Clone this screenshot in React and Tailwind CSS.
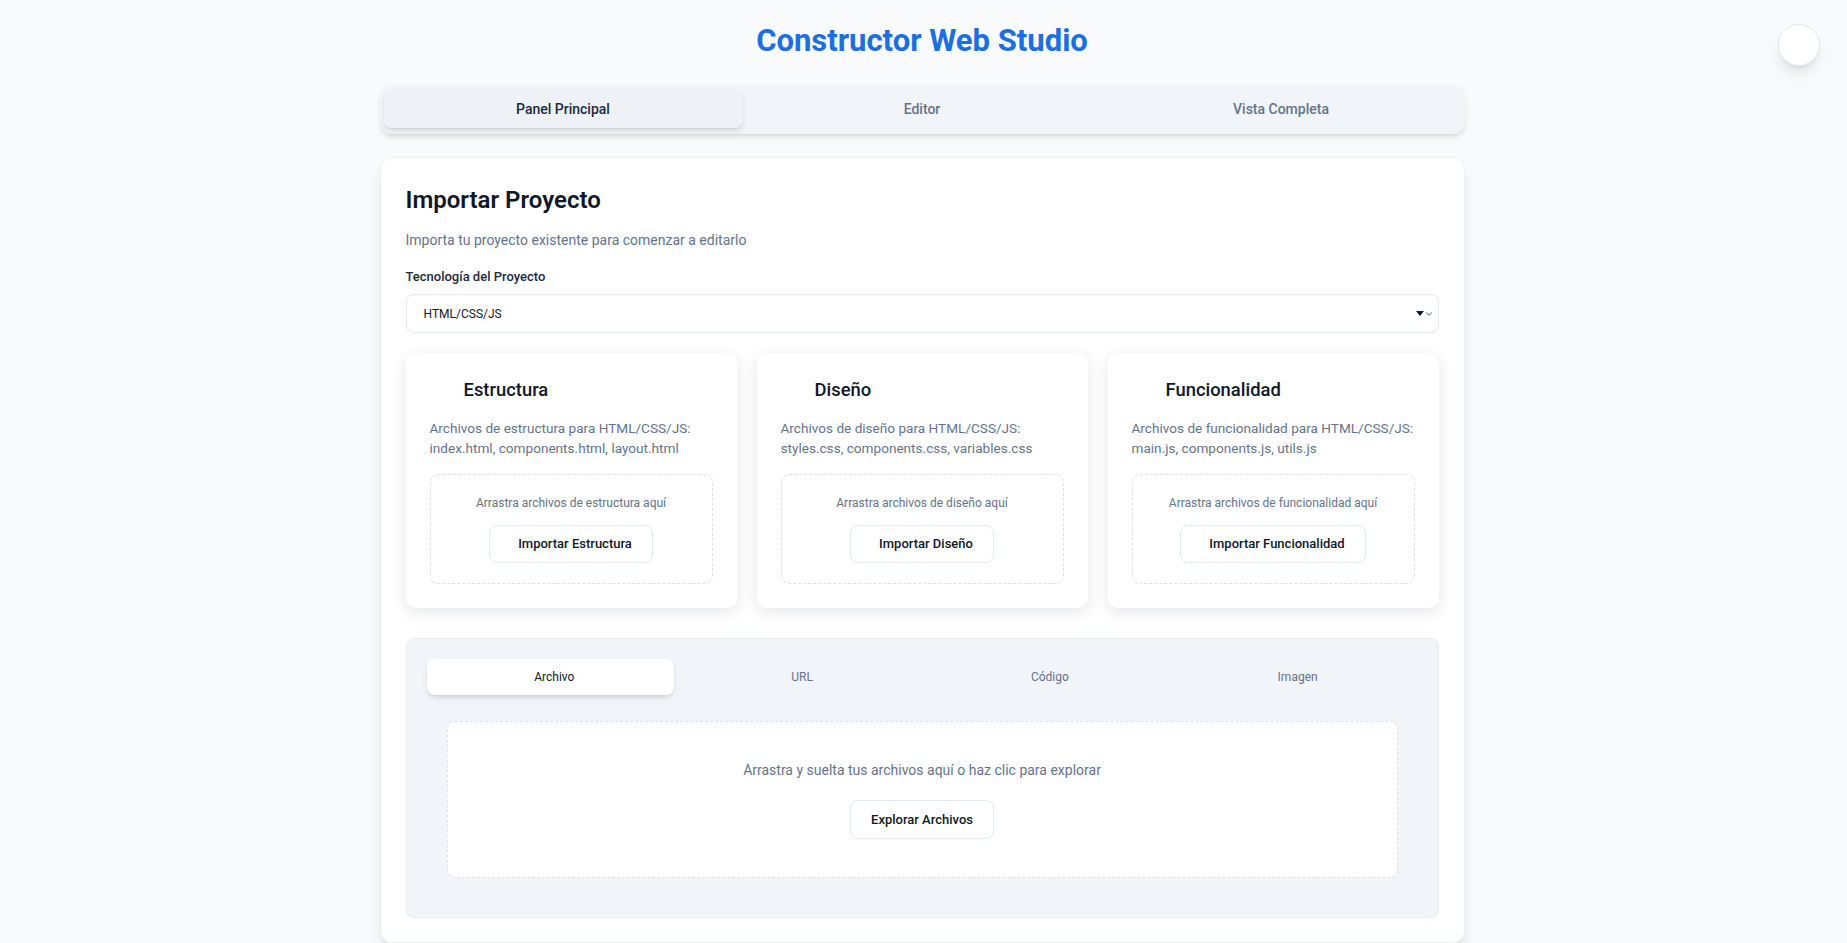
import React, { useState } from 'react';

// Project importer landing page: header, main tabs, import card with three file groups and a source picker

const groups = [
    {
        title: 'Estructura',
        desc: 'Archivos de estructura para HTML/CSS/JS: index.html, components.html, layout.html',
        drop: 'Arrastra archivos de estructura aquí',
        button: 'Importar Estructura',
    },
    {
        title: 'Diseño',
        desc: 'Archivos de diseño para HTML/CSS/JS: styles.css, components.css, variables.css',
        drop: 'Arrastra archivos de diseño aquí',
        button: 'Importar Diseño',
    },
    {
        title: 'Funcionalidad',
        desc: 'Archivos de funcionalidad para HTML/CSS/JS: main.js, components.js, utils.js',
        drop: 'Arrastra archivos de funcionalidad aquí',
        button: 'Importar Funcionalidad',
    },
];

const mainTabs = ['Panel Principal', 'Editor', 'Vista Completa'];
const sourceTabs = ['Archivo', 'URL', 'Código', 'Imagen'];

const App = () => {
    const [mainTab, setMainTab] = useState('Panel Principal');
    const [sourceTab, setSourceTab] = useState('Archivo');

    return (
        <div className="min-h-screen bg-[#f8fafc] font-['Roboto',sans-serif] text-[#0f172a]">
            {/* floating round button */}
            <button className="fixed top-6 right-[27px] w-[42px] h-[42px] rounded-full bg-white border border-[#e2e8f0] shadow-lg" />

            <div className="w-[1088px] mx-auto pt-[23px] pb-10">
                <h1 className="w-[1085px] text-center text-[31px] leading-9 font-bold text-[#1a6fe3]">Constructor Web Studio</h1>

                {/* main tabs */}
                <div className="w-[1085px] mt-[26px] grid grid-cols-3 px-1 pt-1 pb-[6px] rounded-xl bg-[#f1f5f9] shadow-md">
                    {mainTabs.map((t) => (
                        <button
                            key={t}
                            onClick={() => setMainTab(t)}
                            className={`h-[39px] pt-[2px] rounded-lg text-[14px] font-medium ${mainTab === t ? 'bg-[#eef2f7] text-[#1e293b] shadow-md' : 'text-[#64748b]'}`}
                        >
                            {t}
                        </button>
                    ))}
                </div>

                {/* import card */}
                <div className="w-[1085px] mt-[23px] bg-white rounded-xl shadow-lg border border-[#eef1f5] px-[25px] pt-[26px] pb-6">
                    <h2 className="text-2xl font-semibold text-[#0f172a]">Importar Proyecto</h2>
                    <p className="mt-[14px] text-[14px] leading-5 text-[#64748b]">Importa tu proyecto existente para comenzar a editarlo</p>

                    <label className="block mt-[19px] text-[13px] leading-4 font-medium text-[#1e293b]">Tecnología del Proyecto</label>
                    <div className="mt-[9px] h-[39px] flex items-center justify-between px-[17px] rounded-lg border border-[#e2e8f0] bg-white">
                        <span className="text-[12px] text-[#0f172a]">HTML/CSS/JS</span>
                        <span className="flex items-center -mr-[13px]">
                            <svg width="8" height="5" viewBox="0 0 8 5"><path d="M0 0h8L4 5z" fill="#111827" /></svg>
                            <svg width="10" height="10" viewBox="0 0 24 24" fill="none" stroke="#6b7280" strokeWidth="2.5" strokeLinecap="round" strokeLinejoin="round"><path d="m6 9 6 6 6-6" /></svg>
                        </span>
                    </div>

                    {/* file groups */}
                    <div className="mt-5 grid grid-cols-3 gap-5">
                        {groups.map((g) => (
                            <div key={g.title} className="bg-white rounded-[10px] shadow-[0_4px_16px_rgba(15,23,42,0.11)] pt-[23px] px-6 pb-6">
                                <div className="flex items-center h-7">
                                    <span className="w-6 mr-2.5" />
                                    <h3 className="text-[18.4px] font-medium text-[#0f172a]">{g.title}</h3>
                                </div>
                                <p className="mt-[14px] text-[13.6px] leading-5 text-[#64748b]">{g.desc}</p>
                                <div className="mt-4 rounded-lg border border-dashed border-[#dbe2ea] p-5 flex flex-col items-center">
                                    <p className="text-[12px] leading-4 text-[#64748b]">{g.drop}</p>
                                    <button className="mt-[14px] h-[38px] pl-7 pr-5 rounded-lg border border-[#e2e8f0] bg-white text-[13px] font-medium text-[#0f172a]">
                                        {g.button}
                                    </button>
                                </div>
                            </div>
                        ))}
                    </div>

                    {/* source picker */}
                    <div className="mt-[30px] rounded-lg bg-[#f1f5f9] border border-[#e9edf2] p-5">
                        <div className="grid grid-cols-4">
                            {sourceTabs.map((t) => (
                                <button
                                    key={t}
                                    onClick={() => setSourceTab(t)}
                                    className={`h-9 flex items-center justify-center gap-2 rounded-lg text-[12px] ${sourceTab === t ? 'bg-white text-[#0f172a] shadow-md' : 'text-[#64748b]'}`}
                                >
                                    <span className="w-0" />
                                    {t}
                                </button>
                            ))}
                        </div>
                        <div className="px-5 pt-[26px] pb-[19px]">
                            <div className="rounded-lg border border-dashed border-[#dbe2ea] bg-white py-[38px] flex flex-col items-center">
                                <p className="text-[14px] leading-5 text-[#64748b]">Arrastra y suelta tus archivos aquí o haz clic para explorar</p>
                                <button className="mt-5 h-[39px] px-5 rounded-lg border border-[#e2e8f0] bg-white text-[13px] font-medium text-[#0f172a]">
                                    Explorar Archivos
                                </button>
                            </div>
                        </div>
                    </div>
                </div>
            </div>
        </div>
    );
};

export default App;
